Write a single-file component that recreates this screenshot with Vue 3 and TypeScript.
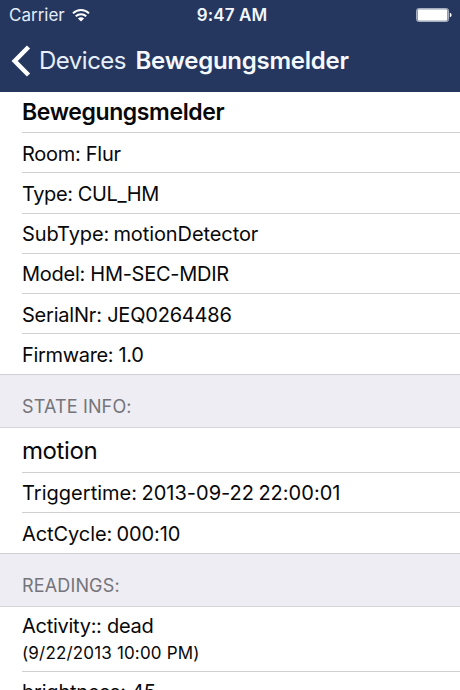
<script setup lang="ts">
interface Row {
  text: string
  kind: string
  tracking: number
  detail?: string
}
interface Section {
  heading?: string
  rows: Row[]
}

const sections: Section[] = [
  {
    rows: [
      { text: 'Bewegungsmelder', kind: 'title', tracking: -0.38 },
      { text: 'Room: Flur', kind: 'plain', tracking: -0.28 },
      { text: 'Type: CUL_HM', kind: 'plain', tracking: -0.4 },
      { text: 'SubType: motionDetector', kind: 'plain tight', tracking: -0.09 },
      { text: 'Model: HM-SEC-MDIR', kind: 'plain', tracking: -0.27 },
      { text: 'SerialNr: JEQ0264486', kind: 'plain', tracking: -0.21 },
      { text: 'Firmware: 1.0', kind: 'plain', tracking: -0.33 },
    ],
  },
  {
    heading: 'STATE INFO:',
    rows: [
      { text: 'motion', kind: 'state', tracking: -0.4 },
      { text: 'Triggertime: 2013-09-22 22:00:01', kind: 'plain tight', tracking: 0.02 },
      { text: 'ActCycle: 000:10', kind: 'plain tight', tracking: -0.08 },
    ],
  },
  {
    heading: 'READINGS:',
    rows: [
      { text: 'Activity:: dead', kind: 'reading', tracking: -0.28, detail: '(9/22/2013 10:00 PM)' },
      { text: 'brightness: 45', kind: 'reading', tracking: -0.2, detail: '(9/22/2013 10:00 PM)' },
    ],
  },
]
</script>

<template>
  <div class="screen">
    <header class="top">
      <div class="status">
        <div class="carrier">
          <span>Carrier</span>
          <svg class="wifi" width="18" height="13" viewBox="0 0 18 13">
            <path d="M1 4.4a11.4 11.4 0 0 1 16 0" />
            <path d="M3.8 7.3a7.4 7.4 0 0 1 10.4 0" />
            <path class="dot" d="M9 12.6 5.9 9.5a4.4 4.4 0 0 1 6.2 0z" />
          </svg>
        </div>
        <span class="clock">9:47 AM</span>
        <svg class="battery" width="36" height="14" viewBox="0 0 36 14">
          <rect class="shell" x=".5" y=".5" width="32" height="13" rx="2" />
          <rect x="1.5" y="1.2" width="30" height="11.6" rx="1" />
          <path d="M33.8 4.7q1.8.5 1.8 2.3t-1.8 2.3z" />
        </svg>
      </div>
      <nav class="nav">
        <svg class="chevron" width="20" height="32" viewBox="0 0 20 32">
          <path d="M17.5 2 3.7 16l13.8 14" />
        </svg>
        <span class="back">Devices</span>
        <h1>Bewegungsmelder</h1>
      </nav>
    </header>
    <main>
      <section v-for="(section, i) in sections" :key="i">
        <h2 v-if="section.heading"><span>{{ section.heading }}</span></h2>
        <ul>
          <li v-for="row in section.rows" :key="row.text" :class="row.kind">
            <span class="label" :style="{ letterSpacing: row.tracking + 'px' }">{{ row.text }}</span>
            <span v-if="row.detail" class="detail">{{ row.detail }}</span>
          </li>
        </ul>
      </section>
    </main>
  </div>
</template>

<style>
body {
  margin: 0;
  overflow: hidden;
}
</style>

<style scoped>
.screen {
  width: 460px;
  height: 690px;
  overflow: hidden;
  background: #fff;
  color: #080808;
  font-family: Inter, "Liberation Sans", sans-serif;
  white-space: nowrap;
}
.top {
  box-sizing: border-box;
  height: 92px;
  background: #25375f;
  color: #fff;
}
.status {
  display: grid;
  grid-template-columns: 1fr auto 1fr;
  align-items: center;
  height: 30px;
  padding: 0 8px 0 9px;
  font-size: 17px;
  line-height: 30px;
}
.carrier {
  display: flex;
  align-items: center;
  gap: 7px;
  color: #e3ecf8;
}
.wifi {
  fill: none;
  stroke: #fff;
  stroke-width: 2;
}
.wifi .dot {
  fill: #fff;
  stroke: none;
}
.clock {
  padding-left: 3px;
  font-weight: 600;
  letter-spacing: 0.1px;
  color: #f3f8ff;
}
.battery {
  justify-self: end;
  fill: #fff;
}
.battery .shell {
  fill: none;
  stroke: #a5afbf;
}
.nav {
  display: flex;
  align-items: center;
  height: 61px;
  padding-left: 11px;
}
.chevron {
  fill: none;
  stroke: #fff;
  stroke-width: 4.5;
}
.back {
  margin-left: 8px;
  font-size: 24px;
  letter-spacing: -0.5px;
  color: #e6effb;
}
h1 {
  margin: 0 0 0 9.5px;
  font-size: 24px;
  font-weight: 600;
  letter-spacing: -0.25px;
  color: #f5f9ff;
}
ul {
  margin: 0;
  padding: 0 0 0 22px;
  list-style: none;
}
li {
  box-sizing: border-box;
  display: flex;
  flex-direction: column;
  height: 40.3px;
  padding-top: 1.6px;
  border-bottom: 1px solid #d0d0d3;
  font-size: 20px;
  line-height: 39px;
}
li:last-child {
  margin-left: -22px;
  padding-left: 22px;
}
.tight {
  word-spacing: -1.3px;
}
.title {
  height: 41px;
  padding-top: 0.6px;
  font-size: 23px;
  font-weight: 600;
}
.state {
  height: 45px;
  padding-top: 0;
  font-size: 24px;
  line-height: 45px;
}
.state + .plain {
  padding-top: 1px;
}
.reading {
  height: 65px;
  padding-top: 6px;
  line-height: 26px;
}
.reading + .reading {
  padding-top: 7.5px;
}
.detail {
  font-size: 17px;
  line-height: 28px;
  letter-spacing: 0.17px;
}
h2 {
  box-sizing: border-box;
  height: 53.25px;
  margin: 0;
  padding: 11px 0 0 22px;
  border-bottom: 1px solid #d5d5d9;
  background: #eeedf3;
  color: #747479;
  font-size: 18px;
  font-weight: 400;
  line-height: 42px;
  letter-spacing: 0.15px;
}
</style>
